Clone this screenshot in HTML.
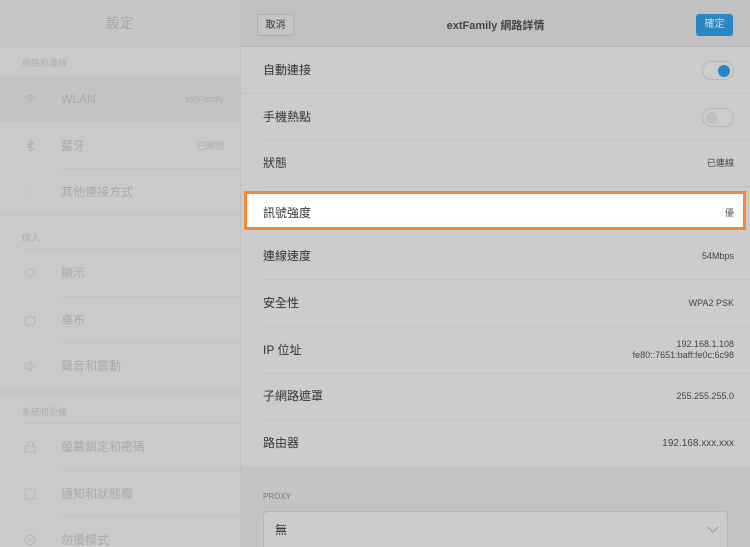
<!DOCTYPE html>
<html style="width:750px;height:547px;overflow:hidden"><head><meta charset="utf-8"><style>
*{margin:0;padding:0;box-sizing:border-box}
body{width:750px;height:547px;overflow:hidden;position:relative;background:#c8c9c8;font-family:"Liberation Sans","Noto Sans CJK TC",sans-serif}
.l{position:absolute;left:0;top:0;width:240px;height:547px;background:#c9cac9;color:#a9aaa9}
.lh{height:47px;background:#c5c6c5;text-align:center;line-height:47px;font-size:14px;color:#a5a6a5}
.sec{position:absolute;left:22px;font-size:9px;color:#adaead}
.it{position:absolute;left:0;width:240px;height:46px;font-size:12px;line-height:46px}
.it .t{position:absolute;left:61px}
.it .v{position:absolute;right:16px;font-size:9px}
.it .ic{position:absolute;left:24px;top:17px;width:12px;height:12px}
.hl{position:absolute;left:61px;right:0;height:1px;background:#c2c3c2}
.r{position:absolute;left:240px;top:0;width:510px;height:547px;background:#cccccc;border-left:1px solid #c0c0c0;overflow:hidden}
.rh{height:47px;background:#c0c0c0;border-bottom:1px solid #b8b8b8;position:relative}
.btn{position:absolute;top:14px;height:22px;border-radius:3px;font-size:10px;line-height:21px;text-align:center}
.row{position:absolute;left:0;width:510px;height:47px;font-size:12px;color:#333;line-height:47px}
.row .t{position:absolute;left:22px}
.row .v{position:absolute;right:17px;font-size:9px;color:#444}
.row .d{position:absolute;left:22px;right:0;bottom:0;height:1px;background:#c2c2c2}
.tg{position:absolute;right:17px;top:14px;width:32px;height:19px;border-radius:10px;border:1px solid #b6b6b6;background:#cdcdcd}
.tg i{position:absolute;top:3px;width:12px;height:12px;border-radius:50%}
</style></head><body>
<div class="l">
<div class="lh">設定</div>
<div class="sec" style="top:56px">網路和連線</div>
<div class="it" style="top:76px;background:#c2c3c2"><svg class="ic" viewBox="0 0 12 12"><path d="M1 5Q6 0 11 5M3 7Q6 4 9 7M5 9Q6 8 7 9" stroke="#9fb6c8" fill="none"/></svg><span class="t">WLAN</span><span class="v">extFamily</span></div>
<div class="it" style="top:123px"><svg class="ic" viewBox="0 0 12 12"><path d="M3 4l6 5-3 2V1l3 2-6 5" stroke="#a9a9bd" fill="none"/></svg><span class="t">藍牙</span><span class="v">已關閉</span></div>
<div class="hl" style="top:168px"></div>
<div class="it" style="top:169px"><svg class="ic" viewBox="0 0 12 12"><path d="M1 6h1M5.5 6h1M10 6h1" stroke="#a8b6c2"/></svg><span class="t">其他連接方式</span></div>
<div style="position:absolute;top:215px;left:0;width:240px;height:1px;background:#c3c4c3"></div>
<div class="sec" style="top:231px">個人</div>
<div class="hl" style="top:249px;left:22px"></div>
<div class="it" style="top:250px"><svg class="ic" viewBox="0 0 12 12"><circle cx="6" cy="6" r="4" stroke="#c6b1a6" fill="none"/></svg><span class="t">顯示</span></div>
<div class="hl" style="top:296px"></div>
<div class="it" style="top:297px"><svg class="ic" viewBox="0 0 12 12"><path d="M1 2l3 2 2-3 2 3 3-2v5a5 5 0 0 1-10 0z" stroke="#a6bcbc" fill="none"/></svg><span class="t">桌布</span></div>
<div class="hl" style="top:342px"></div>
<div class="it" style="top:343px"><svg class="ic" viewBox="0 0 12 12"><path d="M1 4h3l3-3v10l-3-3H1z M9 4q2 2 0 4" stroke="#a9b8c4" fill="none"/></svg><span class="t">聲音和震動</span></div>
<div style="position:absolute;top:389px;left:0;width:240px;height:6px;background:#c6c7c6"></div>
<div class="sec" style="top:405px">系統和設備</div>
<div class="hl" style="top:423px;left:22px"></div>
<div class="it" style="top:424px"><svg class="ic" viewBox="0 0 12 12"><rect x="1" y="5" width="10" height="6" stroke="#c6aeb2" fill="none"/><path d="M3 5V3a3 3 0 0 1 6 0v2" stroke="#c6aeb2" fill="none"/></svg><span class="t">螢幕鎖定和密碼</span></div>
<div class="hl" style="top:470px"></div>
<div class="it" style="top:471px"><svg class="ic" viewBox="0 0 12 12"><path d="M8 1H1v10h10V4" stroke="#a9b8c4" fill="none"/><circle cx="10.5" cy="1.5" r="1" fill="#a9b8c4"/></svg><span class="t">通知和狀態欄</span></div>
<div class="hl" style="top:516px"></div>
<div class="it" style="top:517px"><svg class="ic" viewBox="0 0 12 12"><circle cx="6" cy="6" r="5" stroke="#c6aeb2" fill="none"/><path d="M4 8l4-4" stroke="#c6aeb2"/></svg><span class="t">勿擾模式</span></div>
</div>
<div class="r">
<div class="rh">
<div class="btn" style="left:16px;width:37px;border:1px solid #adadad;color:#333;background:#c4c4c4">取消</div>
<div style="position:absolute;left:0;right:0;text-align:center;top:17px;font-size:11px;font-weight:bold;color:#444">extFamily 網路詳情</div>
<div class="btn" style="right:17px;width:37px;background:#2b87c4;color:#ddd">確定</div>
</div>
<div class="row" style="top:47px;border-bottom:1px solid #c4c4c4"><span class="t">自動連接</span><div class="tg"><i style="right:3px;background:#2b87c4"></i></div></div>
<div class="row" style="top:94px"><span class="t">手機熱點</span><div class="tg"><i style="left:3px;background:#c0c0c0"></i></div><div class="d"></div></div>
<div class="row" style="top:140px"><span class="t">狀態</span><span class="v">已連線</span><div class="d"></div></div>
<div class="row" style="top:233px"><span class="t">連線速度</span><span class="v">54Mbps</span><div class="d"></div></div>
<div class="row" style="top:280px"><span class="t">安全性</span><span class="v">WPA2 PSK</span><div class="d"></div></div>
<div class="row" style="top:327px"><span class="t">IP 位址</span><div style="position:absolute;right:17px;top:12px;font-size:9px;line-height:11px;text-align:right;color:#444">192.168.1.108<br>fe80::7651:baff:fe0c:6c98</div><div class="d"></div></div>
<div class="row" style="top:373px"><span class="t">子網路遮罩</span><span class="v">255.255.255.0</span><div class="d"></div></div>
<div class="row" style="top:420px"><span class="t">路由器</span><span class="v" style="font-size:10px">192.168.xxx.xxx</span></div>
<div style="position:absolute;top:466px;left:0;width:510px;height:81px;background:#c3c3c3"></div>
<div style="position:absolute;top:492px;left:22px;font-size:8px;color:#777">PROXY</div>
<div style="position:absolute;top:511px;left:22px;width:465px;height:40px;border:1px solid #b4b4b4;border-radius:4px;background:#cbcbcb;font-size:12px;color:#333;padding:9px 0 0 11px">無<svg style="position:absolute;right:8px;top:14px" width="12" height="8" viewBox="0 0 12 8"><path d="M1 1l5 5 5-5" stroke="#999" fill="none"/></svg></div>
</div>
<div style="position:absolute;left:244px;top:191px;width:502px;height:39px;border:3px solid #f08a3a;background:#fff"><span style="position:absolute;left:16px;top:10px;font-size:12px;color:#333">訊號強度</span><span style="position:absolute;right:9px;top:12px;font-size:9px;color:#555">優</span></div>
</body></html>
